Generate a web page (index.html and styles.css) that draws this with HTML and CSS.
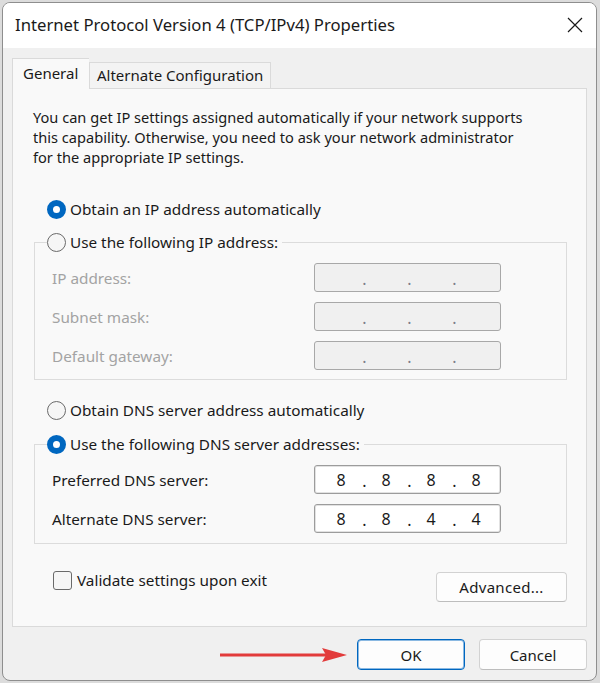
FILE: index.html
```html
<!DOCTYPE html>
<html lang="en">
<head>
    <meta charset="UTF-8">
    <title>Internet Protocol Version 4 (TCP/IPv4) Properties</title>
    <link rel="stylesheet" href="styles.css">
</head>
<body>
    <div class="window">
        <div class="titlebar">
            <span class="title">Internet Protocol Version 4 (TCP/IPv4) Properties</span>
            <svg class="close" width="16" height="16" viewBox="0 0 16 16">
                <path d="M1 1 L15 15 M15 1 L1 15" stroke="#1a1a1a" stroke-width="1.2" fill="none"/>
            </svg>
        </div>

        <div class="content">
            <!-- Tabs -->
            <div class="tabs">
                <div class="tab active">General</div>
                <div class="tab alt">Alternate Configuration</div>
            </div>

            <div class="panel">
                <p class="intro">
                    You can get IP settings assigned automatically if your network supports<br>
                    this capability. Otherwise, you need to ask your network administrator<br>
                    for the appropriate IP settings.
                </p>

                <div class="radio first checked"><span class="circle"></span>Obtain an IP address automatically</div>

                <fieldset class="group disabled">
                    <legend><span class="radio"><span class="circle"></span>Use the following IP address:</span></legend>
                    <div class="rows">
                        <span class="label">IP address:</span>
                        <div class="ipbox"><span></span><i>.</i><span></span><i>.</i><span></span><i>.</i><span></span></div>
                        <span class="label">Subnet mask:</span>
                        <div class="ipbox"><span></span><i>.</i><span></span><i>.</i><span></span><i>.</i><span></span></div>
                        <span class="label">Default gateway:</span>
                        <div class="ipbox"><span></span><i>.</i><span></span><i>.</i><span></span><i>.</i><span></span></div>
                    </div>
                </fieldset>

                <div class="radio dns-auto"><span class="circle"></span>Obtain DNS server address automatically</div>

                <fieldset class="group dns">
                    <legend><span class="radio checked"><span class="circle"></span>Use the following DNS server addresses:</span></legend>
                    <div class="rows">
                        <span class="label">Preferred DNS server:</span>
                        <div class="ipbox"><span>8</span><i>.</i><span>8</span><i>.</i><span>8</span><i>.</i><span>8</span></div>
                        <span class="label">Alternate DNS server:</span>
                        <div class="ipbox"><span>8</span><i>.</i><span>8</span><i>.</i><span>4</span><i>.</i><span>4</span></div>
                    </div>
                </fieldset>

                <div class="bottom-row">
                    <div class="check"><span class="box"></span>Validate settings upon exit</div>
                    <button class="btn advanced">Advanced...</button>
                </div>
            </div>

            <div class="actions">
                <button class="btn primary">OK</button>
                <button class="btn">Cancel</button>
            </div>
        </div>

        <!-- Annotation arrow -->
        <svg class="arrow" width="132" height="20" viewBox="0 0 132 20">
            <path d="M2 10 L110 10" stroke="#e23b3b" stroke-width="3" fill="none"/>
            <polygon points="129,10 104,3 108,10 104,17" fill="#e23b3b"/>
        </svg>
    </div>
</body>
</html>
```

FILE: styles.css
```css
* {
    margin: 0;
    padding: 0;
    box-sizing: border-box;
}

body {
    font-family: "Noto Sans", "Open Sans", sans-serif;
    font-size: 15.3px;
    color: #000;
    background-color: #dcdcdc;
    width: 600px;
    height: 683px;
    overflow: hidden;
}

.window {
    position: relative;
    margin: 2px 0 0 2px;
    width: 595px;
    height: 679px;
    border: 1px solid #8e8e8e;
    border-radius: 8px;
    background-color: #f0f0f0;
    overflow: hidden;
}

/* Title bar */
.titlebar {
    height: 45px;
    background-color: #fff;
    display: flex;
    align-items: center;
    justify-content: space-between;
    padding: 0 12px 0 12px;
}

.title {
    font-size: 16.7px;
    color: #1a1a1a;
    margin-top: -2px;
}

.close {
    margin-top: -2px;
    margin-right: 1px;
}

.content {
    padding: 10px 9px 0 9px;
}

/* Tabs */
.tabs {
    display: flex;
    align-items: flex-end;
    height: 30px;
}

.tab {
    height: 26px;
    line-height: 24px;
    padding: 0 0 0 7px;
    background-color: #f3f3f3;
    border: 1px solid #dadada;
    border-bottom: none;
    color: #1a1a1a;
    font-size: 15px;
    white-space: nowrap;
}

.tab.alt {
    width: 182px;
}

.tab.active {
    position: relative;
    z-index: 1;
    height: 31px;
    margin-bottom: -1px;
    width: 77px;
    padding-left: 10px;
    line-height: 28px;
    background-color: #f9f9f9;
    border-right: none;
}

.panel {
    height: 539px;
    background-color: #f9f9f9;
    border: 1px solid #dadada;
    padding: 18px 0 0 0;
}

.intro {
    margin-left: 20px;
    line-height: 20px;
    font-size: 14.6px;
    color: #1a1a1a;
    white-space: nowrap;
}

/* Radio buttons */
.radio {
    display: flex;
    align-items: center;
    height: 20px;
    line-height: 20px;
    color: #1a1a1a;
    white-space: nowrap;
}

.radio .circle {
    width: 19px;
    height: 19px;
    border-radius: 50%;
    border: 1px solid #6a6a6a;
    background-color: #f6f6f6;
    margin-right: 4px;
    flex-shrink: 0;
}

.radio.checked .circle {
    border: 6px solid #0067c0;
    background-color: #fff;
}

.radio.first {
    margin: 32px 0 0 34px;
}

.radio.dns-auto {
    margin: 20px 0 0 34px;
}

/* Group boxes */
.group {
    margin: 13px 19px 0 21px;
    border: 1px solid #dcdcdc;
    padding: 0 0 9px 0;
}

.group legend {
    margin-left: 12px;
    padding: 0 4px 0 0;
}

.group.dns {
    margin-top: 14px;
    padding-bottom: 10px;
}

.rows {
    display: grid;
    grid-template-columns: 262px 187px;
    row-gap: 10px;
    padding: 11px 0 0 17px;
    align-items: center;
}

.label {
    color: #1a1a1a;
}

.disabled .label {
    color: #a3a3a3;
}

.ipbox {
    height: 29px;
    display: flex;
    align-items: center;
    padding-left: 6px;
    background-color: #fff;
    border: 1px solid #9c9c9c;
    border-radius: 3px;
    box-shadow: inset 0 0 0 1px #e2e2e2;
    font-size: 16px;
    color: #1a1a1a;
}

.disabled .ipbox {
    background-color: #f0f0f0;
    border-color: #a8a8a8;
    box-shadow: none;
    color: #7d7d8a;
}

.ipbox span {
    width: 40px;
    text-align: center;
}

.ipbox i {
    font-style: normal;
    width: 5px;
    text-align: center;
    position: relative;
    left: 1px;
    top: 1px;
}

/* Checkbox + advanced */
.bottom-row {
    display: flex;
    justify-content: space-between;
    align-items: flex-start;
    margin: 26px 19px 0 40px;
}

.check {
    display: flex;
    align-items: center;
    height: 20px;
    color: #1a1a1a;
}

.check .box {
    width: 19px;
    height: 19px;
    border: 1px solid #6a6a6a;
    border-radius: 3px;
    background-color: #f6f6f6;
    margin-right: 5px;
}

.btn {
    font-family: inherit;
    font-size: 15px;
    color: #1a1a1a;
    background-color: #fdfdfd;
    border: 1px solid #d2d2d2;
    border-bottom-color: #bdbdbd;
    border-radius: 4px;
    height: 30px;
}

.advanced {
    width: 131px;
    margin-top: 2px;
    letter-spacing: 0.3px;
}

/* Dialog buttons */
.actions {
    display: flex;
    justify-content: flex-end;
    gap: 14px;
    margin-top: 12px;
}

.actions .btn {
    width: 108px;
    height: 31px;
}

.actions .btn.primary {
    border: 1px solid #0067c0;
    box-shadow: inset 0 0 0 1px rgba(0, 103, 192, 0.45);
}

.arrow {
    position: absolute;
    left: 215px;
    top: 642px;
}
```
